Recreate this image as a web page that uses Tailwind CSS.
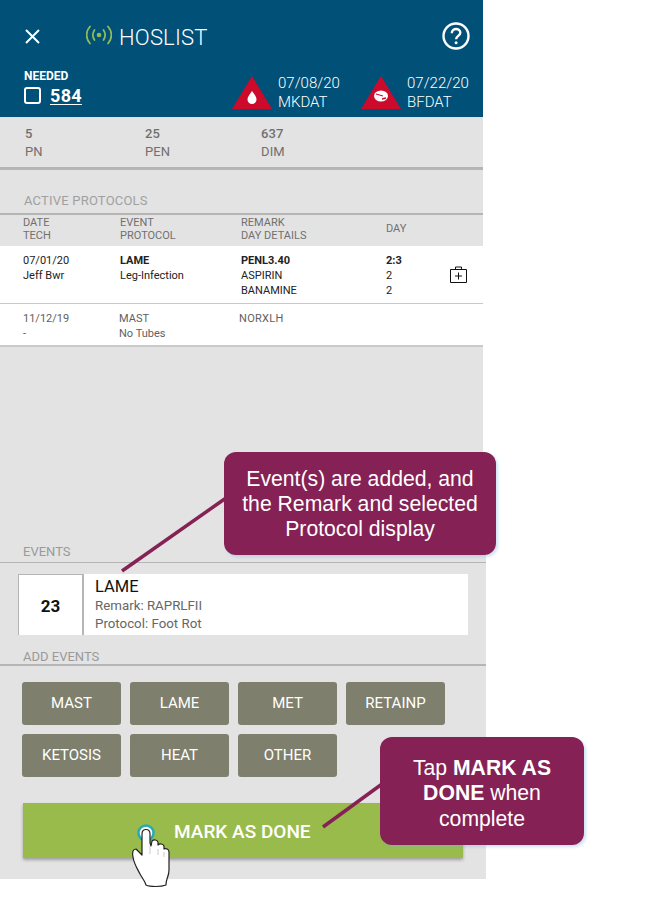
<!DOCTYPE html>
<html lang="en">
<head>
    <meta charset="UTF-8">
    <title>HOSLIST</title>
    <script src="https://cdn.jsdelivr.net/npm/@tailwindcss/browser@4"></script>
</head>
<body class="bg-white font-['Roboto',sans-serif]">
<div class="relative w-[647px] h-[906px] overflow-hidden">

    <!-- upper part of the phone screen -->
    <div class="w-[483px] h-[527px] bg-[#e3e3e3]">
        <header class="h-[118px] bg-[#005078] border-b border-[#cfe6ee] text-white flex flex-col">
            <div class="h-[71px] pl-[24px] pr-[13px] pt-[22px] flex items-start">
                <svg class="w-[17px] h-[17px] mt-[6px]" viewBox="0 0 17 17" fill="none" stroke="white" stroke-width="2"><path d="M2 2l13 13M15 2L2 15"/></svg>
                <svg class="w-[26px] h-[20px] ml-[45px] mt-[3px]" viewBox="0 0 26 20" fill="none" stroke="#8dbb5a" stroke-width="1.800" stroke-linecap="round">
                    <circle cx="13" cy="10" r="2.300" fill="#8dbb5a" stroke="none"/>
                    <path d="M8.500 5c-2 3-2 7 0 10M17.500 5c2 3 2 7 0 10M4 1.500c-4.500 5-4.500 12 0 17M22 1.500c4.500 5 4.500 12 0 17"/>
                </svg>
                <span class="ml-[7px] mt-[3px] text-[22px] leading-[26px] tracking-[0.2px] font-light">HOSLIST</span>
                <svg class="w-[28px] h-[28px] ml-auto" viewBox="0 0 28 28" fill="none">
                    <circle cx="14" cy="14" r="12.500" stroke="white" stroke-width="2.400"/>
                    <path d="M9.800 11.200c0-2.500 1.900-4.200 4.300-4.200s4.200 1.600 4.200 3.800c0 3-4.200 3.200-4.200 6.400" stroke="white" stroke-width="2.400"/>
                    <circle cx="14.100" cy="20.800" r="1.500" fill="white"/>
                </svg>
            </div>
            <div class="flex pl-[24px]">
                <div class="w-[208px] -mt-[2px]">
                    <div class="text-[12px] leading-[14px] font-bold">NEEDED</div>
                    <div class="flex items-center mt-[2px]">
                        <span class="w-[17px] h-[17px] border-2 border-white rounded-[3px]"></span>
                        <span class="ml-[9px] text-[18px] leading-[21px] font-bold underline underline-offset-2 tracking-[0.3px]">584</span>
                    </div>
                </div>
                <div class="flex w-[129px]">
                    <svg class="w-[40px] h-[33px] mt-[5px]" viewBox="0 0 40 33">
                        <path d="M20 0L40 33H0Z" fill="#cb0a2c"/>
                        <path d="M20 15c2.500 3.500 4.500 6 4.500 8.500a4.500 4.500 0 0 1-9 0c0-2.500 2-5 4.500-8.500Z" fill="white"/>
                    </svg>
                    <div class="ml-[6px] pt-[3px] text-[15px] leading-[19px] font-light">
                        <div>07/08/20</div>
                        <div>MKDAT</div>
                    </div>
                </div>
                <div class="flex">
                    <svg class="w-[40px] h-[33px] mt-[5px]" viewBox="0 0 40 33">
                        <path d="M20 0L40 33H0Z" fill="#cb0a2c"/>
                        <ellipse cx="20" cy="20" rx="7" ry="5.500" fill="white"/>
                        <path d="M15 18l7 2M21 23l4-1" stroke="#cb0a2c" stroke-width="1.300"/>
                    </svg>
                    <div class="ml-[6px] pt-[3px] text-[15px] leading-[19px] font-light">
                        <div>07/22/20</div>
                        <div>BFDAT</div>
                    </div>
                </div>
            </div>
        </header>

        <div class="h-[52px] border-b-[3px] border-[#b5b5b5] pl-[25px] pt-[7px] flex text-[13px] leading-[18px] text-[#707070] tracking-[0.1px]">
            <div class="w-[120px]"><div class="font-medium">5</div><div>PN</div></div>
            <div class="w-[116px]"><div class="font-medium">25</div><div>PEN</div></div>
            <div><div class="font-medium">637</div><div>DIM</div></div>
        </div>

        <div class="h-[43px] pl-[24px] pt-[23px] text-[13px] leading-[16px] tracking-[0.2px] text-[#a0a0a0]">ACTIVE PROTOCOLS</div>

        <div class="h-[33px] border-t-2 border-[#b5b5b5] grid grid-cols-[97px_121px_145px_1fr] pl-[23px] pt-[1px] text-[11px] leading-[13px] text-[#707070]">
            <div>DATE<br>TECH</div>
            <div>EVENT<br>PROTOCOL</div>
            <div>REMARK<br>DAY DETAILS</div>
            <div class="self-center -mt-[6px]">DAY</div>
        </div>

        <div class="h-[58px] bg-white border-b border-[#c9c9c9] grid grid-cols-[97px_121px_145px_64px_1fr] pl-[23px] pt-[7px] text-[11px] leading-[15px] text-[#222222]">
            <div>07/01/20<br>Jeff Bwr</div>
            <div><b class="font-bold">LAME</b><br>Leg-Infection</div>
            <div><b class="font-bold">PENL3.40</b><br>ASPIRIN<br>BANAMINE</div>
            <div><b class="font-bold">2:3</b><br>2<br>2</div>
            <svg class="w-[17px] h-[17px] mt-[13px]" viewBox="0 0 17 17" fill="none" stroke="#111111" stroke-width="1">
                <path d="M.5 3.500h16v13H.5ZM5.500 3.500v-2.500h6v2.500M8.500 6.500v7M5 10h7"/>
            </svg>
        </div>

        <div class="h-[43px] bg-white border-b-2 border-[#c9c9c9] grid grid-cols-[96px_120px_1fr] pl-[23px] pt-[7px] text-[11px] leading-[15px] text-[#5f5f5f]">
            <div>11/12/19<br>-</div>
            <div>MAST<br>No Tubes</div>
            <div class="tracking-[0.3px]">NORXLH</div>
        </div>
    </div>

    <!-- lower part, a little wider than the top -->
    <div class="w-[486px] h-[352px] bg-[#e3e3e3]">
        <div class="h-[36px] border-b border-[#b5b5b5] pl-[23px] pt-[17px] text-[13px] leading-[15px] text-[#9a9a9a]">EVENTS</div>
        <div class="flex h-[61px] w-[450px] ml-[18px] mt-[11px] bg-white">
            <div class="w-[66px] pt-[4px] border-l border-t border-r-2 border-[#b5b5b5] flex items-center justify-center text-[17px] font-bold text-[#111111]">23</div>
            <div class="pl-[11px] pt-[3px]">
                <div class="text-[16.500px] leading-[19px] text-[#111111]">LAME</div>
                <div class="text-[13.300px] leading-[18px] mt-[1px] text-[#666666]">Remark: RAPRLFII</div>
                <div class="text-[13.300px] leading-[18px] text-[#666666]">Protocol: Foot Rot</div>
            </div>
        </div>
        <div class="h-[31px] border-b-2 border-[#b5b5b5] pl-[23px] pt-[14px] text-[13px] leading-[15px] text-[#9a9a9a]">ADD EVENTS</div>
        <div class="grid grid-cols-[99px_99px_99px_99px] gap-[9px] pl-[22px] pt-[16px] text-[15px] text-white">
            <div class="h-[43px] bg-[#7e7f6d] rounded-[3px] flex items-center justify-center">MAST</div>
            <div class="h-[43px] bg-[#7e7f6d] rounded-[3px] flex items-center justify-center">LAME</div>
            <div class="h-[43px] bg-[#7e7f6d] rounded-[3px] flex items-center justify-center">MET</div>
            <div class="h-[43px] bg-[#7e7f6d] rounded-[3px] flex items-center justify-center">RETAINP</div>
            <div class="h-[43px] bg-[#7e7f6d] rounded-[3px] flex items-center justify-center">KETOSIS</div>
            <div class="h-[43px] bg-[#7e7f6d] rounded-[3px] flex items-center justify-center">HEAT</div>
            <div class="h-[43px] bg-[#7e7f6d] rounded-[3px] flex items-center justify-center">OTHER</div>
        </div>
        <div class="w-[440px] h-[55px] ml-[23px] mt-[26px] pt-[3px] bg-[#99bb4c] shadow-[0_2px_3px_rgba(0,0,0,0.3)] flex items-center pl-[151px] text-[19px] font-medium text-white">MARK AS DONE</div>
    </div>

    <!-- tutorial overlay -->
    <svg class="absolute left-0 top-0 w-[647px] h-[906px] pointer-events-none" viewBox="0 0 647 906" fill="none">
        <path d="M226 498L122 571" stroke="#862155" stroke-width="3.500"/>
        <path d="M382 784L323 827" stroke="#862155" stroke-width="3.500"/>
        <circle cx="146" cy="833" r="7.500" fill="white" stroke="#2aa9b5" stroke-width="2.500"/>
        <path d="M142 834c0-6 8-6 8 0v9l1 3 1-5c2-2 5-1 6 1v3c2-2 5-1 6 1v3c2-1 5 0 5 3v18c0 4-1 6-2 9s-1 4-1 6c-5 2-16 2-20 0-1-4-4-7-6-11-3-6-6-10-7-17-1-5 0-8 3-8l6 6Z" fill="white" stroke="#222222" stroke-width="1.200" stroke-linejoin="round"/>
        <path d="M150 846v8M158 849v6M164 852v5" stroke="#bbbbbb" stroke-width="0.800"/>
    </svg>
    <div class="absolute left-[224px] top-[452px] w-[272px] h-[103px] bg-[#862155] rounded-[12px] shadow-[2px_2px_3px_rgba(120,170,220,0.35)] flex items-center justify-center text-center font-['Liberation_Sans',sans-serif] text-[21.200px] leading-[25px] text-white">
        <div>Event(s) are added, and<br>the Remark and selected<br>Protocol display</div>
    </div>
    <div class="absolute left-[380px] top-[737px] w-[204px] h-[108px] pt-[4px] bg-[#862155] rounded-[12px] shadow-[2px_2px_3px_rgba(120,170,220,0.35)] flex items-center justify-center text-center font-['Liberation_Sans',sans-serif] text-[21.200px] leading-[25.500px] text-white">
        <div>Tap <b>MARK AS<br>DONE</b> when<br>complete</div>
    </div>
</div>
</body>
</html>
